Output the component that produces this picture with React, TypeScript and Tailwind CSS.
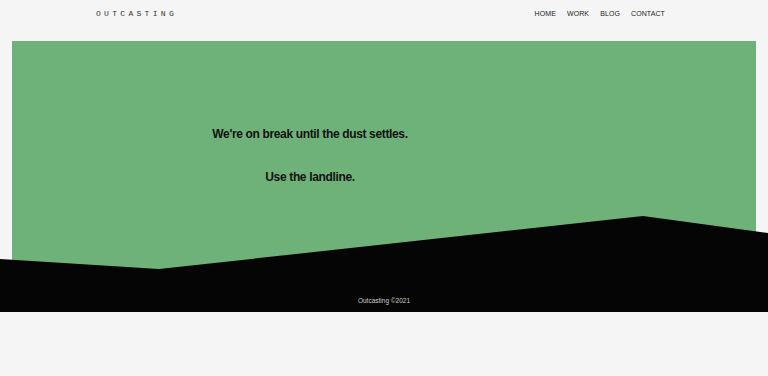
export default function App() {
    const navItems = ['HOME', 'WORK', 'BLOG', 'CONTACT'];

    return (
        <div className="min-h-screen bg-[#f5f5f5] font-['Liberation_Sans',Arial,sans-serif]">
            {/* Header */}
            <header className="h-[41px] flex items-start justify-between pt-[10px] pl-[96px] pr-[103px]">
                <div className="font-['Liberation_Mono','Courier_New',monospace] text-[8px] leading-[8px] tracking-[3.3px] text-[#333]">
                    OUTCASTING
                </div>
                <nav className="flex items-center gap-[11px] text-[7px] leading-[8px] tracking-[0.1px] text-[#222]">
                    {navItems.map((item) => (
                        <a key={item} href="#" className="hover:text-black">
                            {item}
                        </a>
                    ))}
                </nav>
            </header>

            {/* Hero */}
            <section className="mx-[12px] h-[228px] bg-[#6fb279]">
                <div className="w-[400px] ml-[98px] pt-[86px] flex flex-col items-center text-[12px] leading-[14px] font-bold tracking-[-0.35px] text-[#111]">
                    <p>We're on break until the dust settles.</p>
                    <p className="mt-[29px]">Use the landline.</p>
                </div>
            </section>

            {/* Footer */}
            <footer className="relative -mt-[53px]">
                <svg className="block w-full h-[53px]" viewBox="0 0 768 53" preserveAspectRatio="none">
                    <polygon points="0,43 159,53 643,0 768,17 768,53 0,53" fill="#050505" />
                </svg>
                <div className="h-[43px] bg-[#050505] pt-[27px] text-center text-[6.5px] leading-[10px] text-[#ccc]">
                    Outcasting ©2021
                </div>
            </footer>
        </div>
    );
}
